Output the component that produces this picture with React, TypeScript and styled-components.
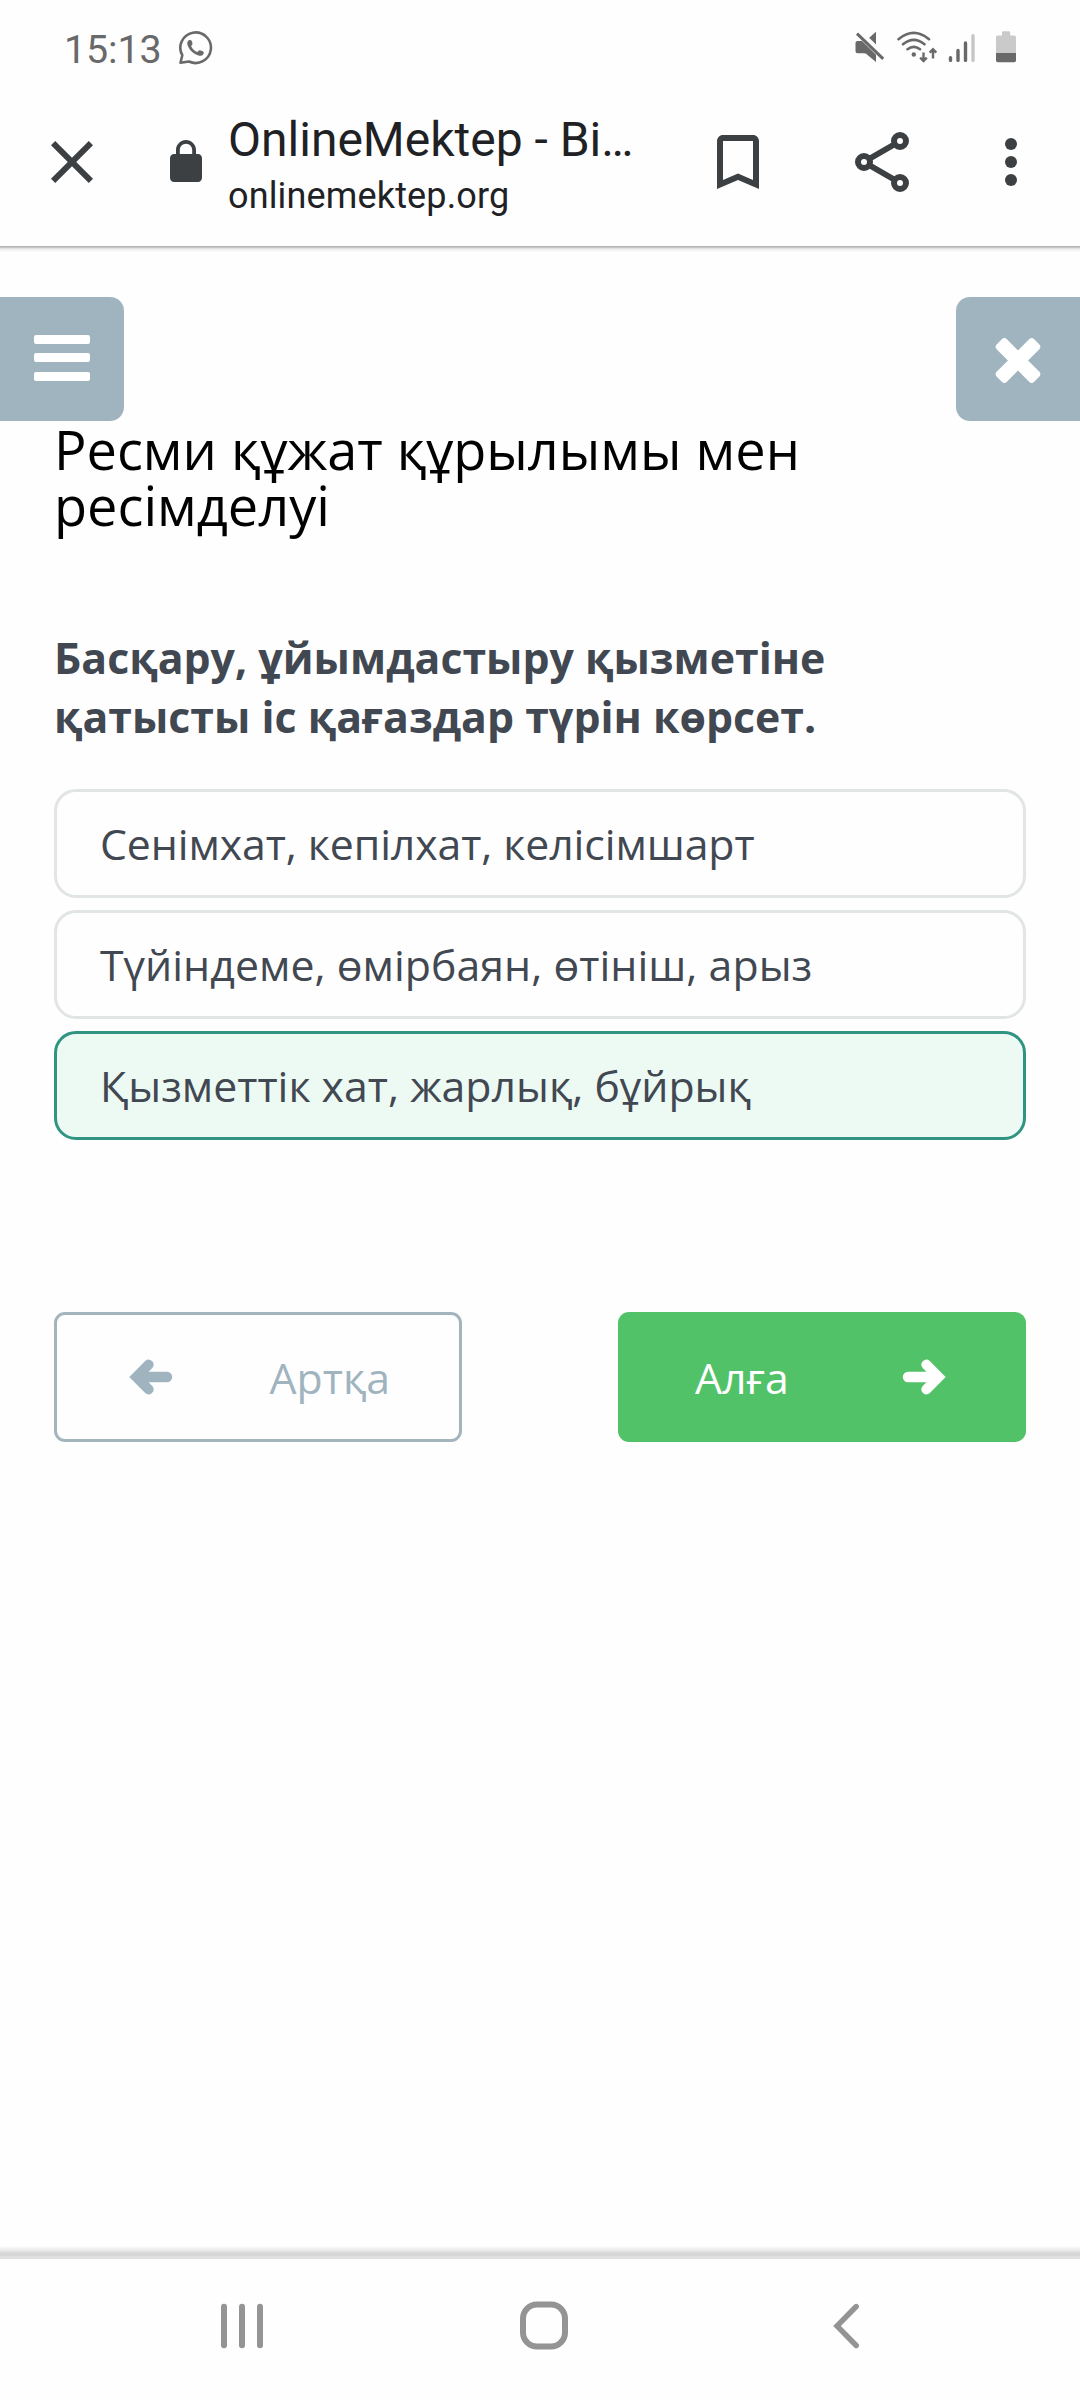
import React from "react";
import styled, { createGlobalStyle } from "styled-components";

const GlobalStyle = createGlobalStyle`
  html, body { margin: 0; padding: 0; background: #fefefe; }
  *, *::before, *::after { box-sizing: border-box; }
  svg { display: block; flex: none; }
  button { margin: 0; padding: 0; border: 0; background: none; font: inherit; color: inherit; text-align: left; }
`;

const Screen = styled.div`
  width: 1080px;
  height: 2400px;
  display: flex;
  flex-direction: column;
  overflow: hidden;
  background: #fefefe;
  font-family: "Open Sans", "Noto Sans", sans-serif;
`;

const StatusBar = styled.header`
  height: 78px;
  padding: 25px 64px 0 64px;
  display: flex;
  justify-content: space-between;
  align-items: flex-start;
  color: #696969;
  font-family: Roboto, sans-serif;
`;

const StatusGroup = styled.div`
  display: flex;
  align-items: flex-start;
`;

const Clock = styled.span`
  width: 115px;
  padding-top: 1px;
  font-size: 39.4px;
  line-height: 48px;
  letter-spacing: -0.1px;
`;

const StatusIcon = styled.svg<{ $top?: number; $gap?: number }>`
  margin-top: ${(p) => p.$top ?? 6}px;
  margin-left: ${(p) => p.$gap ?? 0}px;
`;

const Toolbar = styled.div`
  height: 168px;
  padding: 0 33px 0 36px;
  display: flex;
  align-items: center;
  color: #3c4043;
`;

const IconButton = styled.button<{ $gap?: number }>`
  margin-left: ${(p) => p.$gap ?? 0}px;
  flex: none;
`;

const PageInfo = styled.div`
  width: 420px;
  height: 168px;
  margin-left: 18px;
  padding-top: 32px;
  display: flex;
  flex-direction: column;
  gap: 3px;
  font-family: Roboto, sans-serif;
  color: #202124;
  white-space: nowrap;
`;

const PageTitle = styled.div`
  font-size: 48px;
  line-height: 60px;
`;

const PageHost = styled.div`
  font-size: 36px;
  line-height: 46px;
  letter-spacing: 0.15px;
`;

const TopShadow = styled.div`
  height: 6px;
  flex: none;
  background: linear-gradient(#b4b4b4 0, #b4b4b4 17%, #dcdcdc 34%, #f0f0f0 60%, #fefefe);
`;

const Page = styled.main`
  flex: 1;
  padding-top: 45px;
  display: flex;
  flex-direction: column;
`;

const Controls = styled.div`
  display: flex;
  justify-content: space-between;
`;

const SideButton = styled.button<{ $side: "left" | "right" }>`
  width: 124px;
  height: 124px;
  display: flex;
  align-items: center;
  justify-content: center;
  background: #a0b4c0;
  border-radius: ${(p) => (p.$side === "left" ? "0 14px 14px 0" : "14px 0 0 14px")};
`;

const Content = styled.section`
  padding: 0 54px;
`;

const Heading = styled.h1`
  margin: 0;
  font-size: 54.1px;
  line-height: 56px;
  font-weight: 400;
  color: #000;
`;

const Question = styled.p`
  margin: 95px 0 43px;
  width: 860px;
  font-size: 42.8px;
  line-height: 59px;
  font-weight: 700;
  color: #414851;
`;

const Options = styled.div`
  display: flex;
  flex-direction: column;
  gap: 12px;
`;

const Option = styled.button<{ $selected?: boolean; $tracking?: number }>`
  height: 109px;
  padding: 0 43px;
  display: flex;
  align-items: center;
  border: 3px solid ${(p) => (p.$selected ? "#319483" : "#e1e5e6")};
  border-radius: 22px;
  background: ${(p) => (p.$selected ? "#edf9f3" : "#fefefe")};
  font-size: 42.8px;
  line-height: 59px;
  letter-spacing: ${(p) => p.$tracking ?? 0}px;
  color: #414851;
`;

const Pager = styled.div`
  margin-top: 172px;
  display: flex;
  justify-content: space-between;
`;

const PagerButton = styled.button<{ $primary?: boolean }>`
  width: 408px;
  height: 130px;
  padding: ${(p) => (p.$primary ? "0 80px 0 77px" : "0 69px 0 72px")};
  display: flex;
  align-items: center;
  justify-content: space-between;
  border: ${(p) => (p.$primary ? "0" : "3px solid #a3b4bd")};
  border-radius: 11px;
  background: ${(p) => (p.$primary ? "#52c269" : "transparent")};
  color: ${(p) => (p.$primary ? "#fff" : "#a0b4c0")};
  font-size: 42.8px;
  line-height: 59px;
`;

const BottomShadow = styled.div`
  height: 13px;
  flex: none;
  background: linear-gradient(#fefefe, #e9e9e9 35%, #d6d6d6 55%, #d6d6d6 72%, #e0e0e0 78%, #e0e0e0);
`;

const NavBar = styled.nav`
  height: 141px;
  padding: 41px 220px 0 220px;
  display: flex;
  justify-content: space-between;
  align-items: flex-start;
  flex: none;
`;

const options = [
  { text: "Сенімхат, кепілхат, келісімшарт", tracking: -0.1 },
  { text: "Түйіндеме, өмірбаян, өтініш, арыз", tracking: 0.04 },
  { text: "Қызметтік хат, жарлық, бұйрық", selected: true },
];

const ArrowIcon = ({ flip = false }: { flip?: boolean }) => (
  <svg width="44" height="38" viewBox="0 0 44 38" fill="currentColor">
    <g transform={flip ? "translate(44 0) scale(-1 1)" : undefined}>
      <path d="M0.3 19 L16.2 2.9 A5 5 0 0 1 23.3 9.9 L19.6 13.8 H38 A5.2 5.2 0 0 1 38 24.2 H19.6 L23.3 28.1 A5 5 0 0 1 16.2 35.1 Z" />
    </g>
  </svg>
);

export default function App() {
  return (
    <>
      <GlobalStyle />
      <Screen>
        <StatusBar>
          <StatusGroup>
            <Clock>15:13</Clock>
            <StatusIcon width="34" height="34" viewBox="0 0 34 34" fill="none">
              <path
                d="M1.5 31.8 L3.3 24.2 A15.3 15.3 0 1 1 10 30.5 Z"
                stroke="#696969"
                strokeWidth="2.6"
                strokeLinejoin="round"
              />
              <path
                d="M8.6 10.8 C9.4 9.2 11.3 8.6 12.3 9.6 C13.2 10.8 13.8 12.3 13.3 13.4 C12.9 14.3 12 14.8 12.3 15.4 C13.5 17.9 15.5 19.8 18 21 C18.8 21.3 19.5 19.4 20.5 19.2 C21.5 19 24.3 20.3 24.8 21.2 C25.2 22.5 23.8 24.2 22.2 24.7 C20.8 25 18.4 24.4 16 23 C12.5 21 9.7 17.5 8.6 14.2 C8.2 12.8 8.1 11.8 8.6 10.8 Z"
                fill="#696969"
              />
            </StatusIcon>
          </StatusGroup>
          <StatusGroup>
            <StatusIcon width="30" height="32" viewBox="0 0 30 32" fill="#696969">
              <path d="M0.5 12 Q0.5 10 2.5 10 H7 L21 23.8 V31 L12.5 24 Q11.5 22.2 9 22.2 H2.5 Q0.5 22.2 0.5 20.2 Z" />
              <path d="M14.2 6.8 L21 0.8 V13.6 Z" />
              <path d="M2 2.6 L28.2 27.8" stroke="#696969" strokeWidth="3" />
            </StatusIcon>
            <StatusIcon $gap={11} width="42" height="33" viewBox="0 0 42 33" fill="none" stroke="#696969">
              <path
                d="M2.5 8.2 Q17.8 -4.4 33 8.2 M7 13.2 Q17.8 4.4 28.5 13.2 M11.5 18.2 Q17.8 13.4 24 18.2"
                strokeWidth="2.6"
                strokeLinecap="round"
              />
              <circle cx="17.8" cy="23.5" r="2.2" fill="#696969" stroke="none" />
              <path
                d="M27.5 21.5 V30 M24.2 26.6 L27.5 30 L30.8 26.6 M37 27.5 V18.5 M33.7 21.6 L37 18.2 L40.3 21.6"
                strokeWidth="2.4"
              />
            </StatusIcon>
            <StatusIcon $gap={10} width="28" height="32" viewBox="0 0 28 32" strokeWidth="3.4" strokeLinecap="round">
              <path d="M2.5 26.6 V29.4 M10 19.5 V29.4 M17.5 12 V29.4" stroke="#696969" />
              <path d="M25 4.8 V29.4" stroke="#c6c6c6" />
            </StatusIcon>
            <StatusIcon $gap={20} width="20" height="32" viewBox="0 0 20 32">
              <path d="M6 1.5 Q6 0.3 7.2 0.3 H13 Q14.2 0.3 14.2 1.5 V4.6 H18.4 Q20 4.6 20 6.2 V22 H0 V6.2 Q0 4.6 1.6 4.6 H6 Z" fill="#cacaca" />
              <path d="M0 22 H20 V29.4 Q20 31.2 18.2 31.2 H1.8 Q0 31.2 0 29.4 Z" fill="#696969" />
            </StatusIcon>
          </StatusGroup>
        </StatusBar>

        <Toolbar>
          <IconButton aria-label="Close tab">
            <svg width="72" height="72" viewBox="0 0 24 24" fill="currentColor">
              <path d="M19 6.41L17.59 5 12 10.59 6.41 5 5 6.41 10.59 12 5 17.59 6.41 19 12 13.41 17.59 19 19 17.59 13.41 12z" />
            </svg>
          </IconButton>
          <IconButton $gap={54} aria-label="Site security">
            <svg width="48" height="48" viewBox="0 0 24 24" fill="currentColor">
              <path d="M18 8h-1V6c0-2.76-2.24-5-5-5S7 3.24 7 6v2H6c-1.1 0-2 .9-2 2v10c0 1.1.9 2 2 2h12c1.1 0 2-.9 2-2V10c0-1.1-.9-2-2-2zM8.9 8V6c0-1.71 1.39-3.1 3.1-3.1s3.1 1.39 3.1 3.1v2z" />
            </svg>
          </IconButton>
          <PageInfo>
            <PageTitle>OnlineMektep - Bi…</PageTitle>
            <PageHost>onlinemektep.org</PageHost>
          </PageInfo>
          <IconButton $gap={54} aria-label="Bookmark">
            <svg width="72" height="72" viewBox="0 0 24 24" fill="currentColor">
              <path d="M17 3H7c-1.1 0-1.99.9-1.99 2L5 21l7-3 7 3V5c0-1.1-.9-2-2-2zm0 15l-5-2.18L7 18V5h10v13z" />
            </svg>
          </IconButton>
          <IconButton $gap={72} aria-label="Share">
            <svg width="72" height="72" viewBox="0 0 72 72" fill="none" stroke="currentColor" strokeWidth="6">
              <path d="M23 33 L49 18 M23 39 L49 54" />
              <circle cx="54" cy="15" r="6" fill="#fefefe" />
              <circle cx="18" cy="36" r="6" fill="#fefefe" />
              <circle cx="54" cy="57" r="6" fill="#fefefe" />
            </svg>
          </IconButton>
          <IconButton $gap={57} aria-label="More">
            <svg width="72" height="72" viewBox="0 0 72 72" fill="currentColor">
              <circle cx="36" cy="18" r="6" />
              <circle cx="36" cy="36" r="6" />
              <circle cx="36" cy="54" r="6" />
            </svg>
          </IconButton>
        </Toolbar>
        <TopShadow />

        <Page>
          <Controls>
            <SideButton $side="left" aria-label="Menu">
              <svg width="56" height="48" viewBox="0 0 56 48" fill="#fff">
                <rect width="56" height="9" rx="2" />
                <rect y="18" width="56" height="9" rx="2" />
                <rect y="37" width="56" height="9" rx="2" />
              </svg>
            </SideButton>
            <SideButton $side="right" aria-label="Close">
              <svg width="48" height="50" viewBox="-24 -26.5 48 50" fill="#fff">
                <rect x="-26.4" y="-7.1" width="52.8" height="14.2" rx="3.6" transform="rotate(45)" />
                <rect x="-26.4" y="-7.1" width="52.8" height="14.2" rx="3.6" transform="rotate(-45)" />
              </svg>
            </SideButton>
          </Controls>

          <Content>
            <Heading>
              Ресми құжат құрылымы мен
              <br />
              ресімделуі
            </Heading>
            <Question>
              Басқару, ұйымдастыру қызметіне
              <br />
              қатысты іс қағаздар түрін көрсет.
            </Question>
            <Options>
              {options.map((o) => (
                <Option key={o.text} $selected={o.selected} $tracking={o.tracking}>
                  {o.text}
                </Option>
              ))}
            </Options>
            <Pager>
              <PagerButton>
                <ArrowIcon />
                <span>Артқа</span>
              </PagerButton>
              <PagerButton $primary>
                <span>Алға</span>
                <ArrowIcon flip />
              </PagerButton>
            </Pager>
          </Content>
        </Page>

        <BottomShadow />
        <NavBar>
          <svg width="44" height="52" viewBox="0 0 44 52" fill="#949494">
            <rect x="1" y="3.8" width="6" height="44.4" rx="3" />
            <rect x="19" y="3.8" width="6" height="44.4" rx="3" />
            <rect x="37" y="3.8" width="6" height="44.4" rx="3" />
          </svg>
          <svg width="50" height="52" viewBox="0 0 50 52" fill="none">
            <rect x="4" y="4.5" width="42" height="42" rx="14" stroke="#949494" strokeWidth="6" />
          </svg>
          <svg width="36" height="52" viewBox="0 0 36 52" fill="none">
            <path d="M32.2 6.5 L13 26 L32.2 45.5" stroke="#949494" strokeWidth="5.4" strokeLinecap="round" />
          </svg>
        </NavBar>
      </Screen>
    </>
  );
}
